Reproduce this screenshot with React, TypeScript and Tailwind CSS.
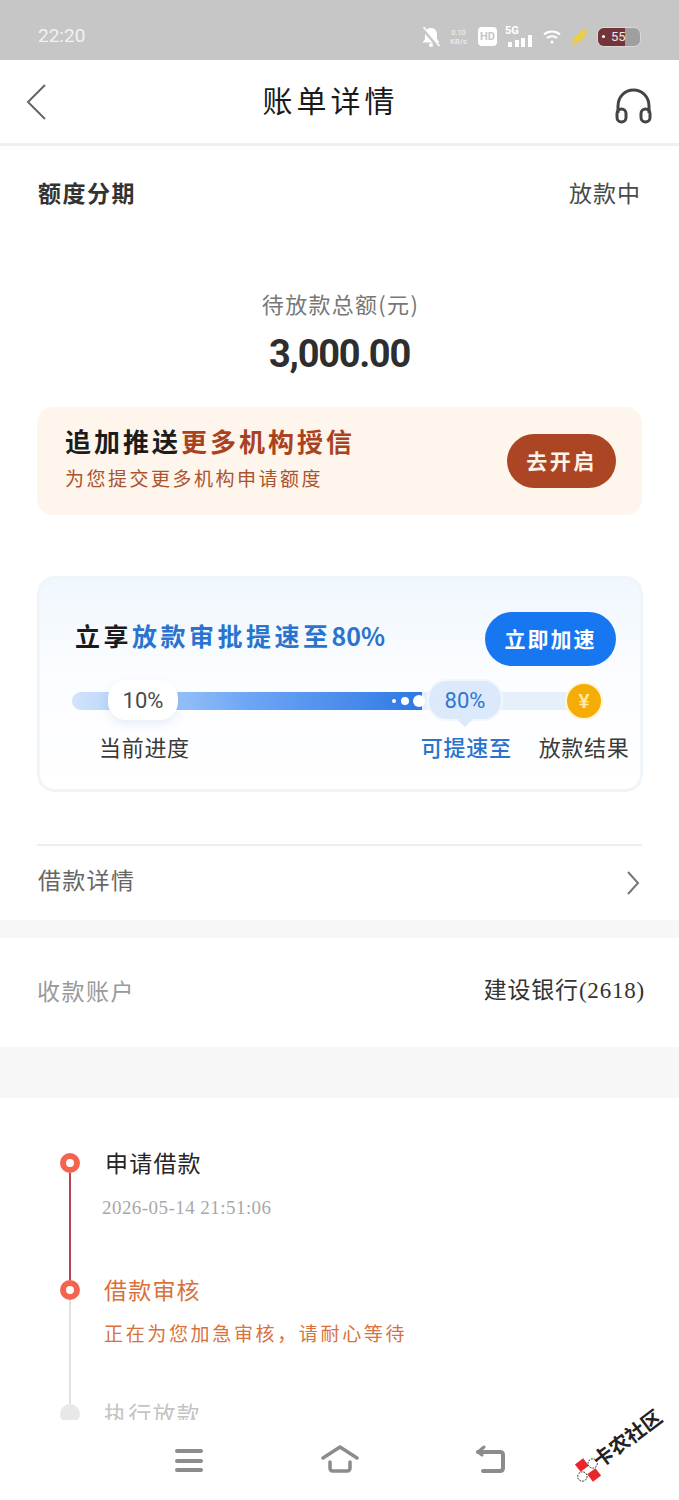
const cjk = "font-['Noto_Sans_CJK_SC','Liberation_Sans',sans-serif]";

function StatusBar() {
  return (
    <div className="flex h-[60px] items-center justify-between bg-[#c6c6c6] pl-[38px] pr-[38px] pt-[13px] text-white">
      <span className="font-['Roboto',sans-serif] text-[19px] text-[#f2f2f2]">22:20</span>
      <div className="flex items-center">
        <svg width="20" height="22" viewBox="0 0 20 22" className="mr-[8px]">
          <path d="M10 2c-3.500 0-6 2.500-6 6.500v4.500l-2.500 3.500h17L16 13V8.500C16 4.500 13.500 2 10 2z" fill="#fff" />
          <circle cx="10" cy="19" r="2" fill="#fff" />
          <path d="M1 2l17 19" stroke="#c6c6c6" strokeWidth="3.500" />
          <path d="M2.500 1l16 19" stroke="#fff" strokeWidth="1.500" />
        </svg>
        <div className="mr-[10px] flex w-[19px] flex-col items-center font-['Roboto',sans-serif] text-[7.500px] leading-[9px] text-[#f4f4f4]">
          <span>0.10</span>
          <span>KB/s</span>
        </div>
        <div className="mr-[8px] flex h-[19px] w-[19px] items-center justify-center rounded-[4px] bg-white font-['Roboto',sans-serif] text-[11px] font-bold leading-none text-[#c6c6c6]">
          HD
        </div>
        <div className="relative mr-[10px] h-[22px] w-[28px]">
          <span className="absolute left-0 top-[-3px] font-['Roboto',sans-serif] text-[11px] font-bold text-white">5G</span>
          <svg width="28" height="22" viewBox="0 0 28 22" className="absolute left-0 top-0">
            <rect x="3" y="16" width="4" height="5" fill="#fff" />
            <rect x="10" y="14" width="4" height="7" fill="#fff" />
            <rect x="16" y="12" width="4" height="9" fill="#fff" />
            <rect x="23" y="9" width="4" height="12" fill="#fff" />
          </svg>
        </div>
        <svg width="18" height="16" viewBox="0 0 18 16" className="mr-[9px]" fill="none" stroke="#fff" strokeWidth="2">
          <path d="M1 5.500c4.500-4 11.500-4 16 0" />
          <path d="M4 9c2.800-2.500 7.200-2.500 10 0" />
          <circle cx="9" cy="13" r="1.500" fill="#fff" stroke="none" />
        </svg>
        <svg width="20" height="20" viewBox="0 0 20 20" className="mr-[7px]">
          <path d="M15 0L0 15l5-1-3 6 9-7-1 4 10-16-6 5z" fill="#e9cf4a" />
        </svg>
        <div className="flex h-[20px] w-[44px] overflow-hidden rounded-[7px] border border-[#d8d8d8] bg-[#9f9f9f]">
          <div className="flex w-[27px] shrink-0 items-center bg-[#74343a] pl-[4px]">
            <span className="h-[3px] w-[3px] rounded-full bg-white" />
          </div>
          <span className="ml-[-14px] font-['Roboto',sans-serif] text-[13px] leading-[18px] text-[#f0e4e4]">55</span>
        </div>
      </div>
    </div>
  );
}

function Header() {
  return (
    <div className="relative flex h-[86px] items-center justify-center border-b-[3px] border-[#efefef] pb-[3px]">
      <svg width="22" height="36" viewBox="0 0 22 36" fill="none" stroke="#666666" strokeWidth="2" className="absolute left-[25px] top-[24px]">
        <path d="M20 1L3 18l17 17" />
      </svg>
      <h1 className={`${cjk} ml-[-18px] mt-[-2px] text-[30px] leading-none tracking-[4px] text-[#1a1a1a]`}>账单详情</h1>
      <svg width="40" height="38" viewBox="0 0 40 38" fill="none" stroke="#444444" strokeWidth="3" className="absolute left-[614px] top-[27px]">
        <path d="M4 26V19C4 9.500 11 3 19.500 3S35 9.500 35 19v7" />
        <rect x="3" y="22" width="9" height="13" rx="4.500" />
        <rect x="27" y="22" width="9" height="13" rx="4.500" />
      </svg>
    </div>
  );
}

function OrangeCard() {
  return (
    <div className="flex h-[108px] items-center justify-between rounded-[16px] bg-[#fef5ed] pl-[28px] pr-[26px]">
      <div className={`${cjk} self-start pt-[16px]`}>
        <p className="text-[26px] font-bold leading-[36px] tracking-[3px] text-[#1c1c1c]">
          追加推送<span className="text-[#a9431f]">更多机构授信</span>
        </p>
        <p className="mt-[5px] text-[19px] leading-[28px] tracking-[2.500px] text-[#a9532f]">为您提交更多机构申请额度</p>
      </div>
      <button className={`${cjk} mt-[-1px] h-[54px] w-[109px] rounded-full bg-[#ab4524] text-[21px] font-bold tracking-[2.500px] text-[#fff3e6]`}>
        去开启
      </button>
    </div>
  );
}

function SpeedCard() {
  return (
    <div className="h-[216px] rounded-[18px] border-[3px] border-[#f0f5fa] bg-gradient-to-b from-[#f0f7fe] via-[#fcfdff] to-white pl-[33px] pr-[24px] pt-[33px]">
      <div className="flex items-center justify-between">
        <p className={`${cjk} ml-[2px] pb-[8px] text-[25px] font-bold leading-[46px] tracking-[3.500px] text-[#1b1b1b]`}>
          立享<span className="text-[#2a74cf]">放款审批提速至<span className="tracking-[0px]">80%</span></span>
        </p>
        <button className={`${cjk} h-[54px] w-[131px] rounded-full bg-[#1677f0] text-[21px] font-bold tracking-[2px] text-white`}>
          立即加速
        </button>
      </div>

      {/* progress track */}
      <div className="relative ml-[-1px] mt-[26px] h-[18px] w-[514px] rounded-full bg-[#e6f0fb]">
        <div className="h-full w-[350px] rounded-l-full bg-gradient-to-r from-[#d3e4fa] via-[#6da6f5] to-[#2d78e4]" />
        <div className="absolute left-[320px] top-[7px] h-[4px] w-[4px] rounded-full bg-white" />
        <div className="absolute left-[329px] top-[5px] h-[8px] w-[8px] rounded-full bg-white" />
        <div className="absolute left-[341px] top-[3px] h-[12px] w-[12px] rounded-full bg-white" />
        <div className="absolute left-[36px] top-[-12px] flex h-[40px] w-[70px] items-center justify-center rounded-[18px] bg-white font-['Roboto',sans-serif] text-[22px] text-[#4a4a4a] shadow-[0_4px_10px_rgba(60,120,200,0.12)]">
          10%
        </div>
        <div className="absolute left-[355px] top-[-13px] flex h-[42px] w-[76px] items-center justify-center rounded-[20px] border-2 border-[#f2f7fd] bg-[#dbe9fb] font-['Roboto',sans-serif] text-[22px] text-[#2d76d2]">
          <span className="absolute bottom-[-6px] left-1/2 h-[10px] w-[10px] -translate-x-1/2 rotate-45 bg-[#dbe9fb]" />
          <span className="relative">80%</span>
        </div>
        <div className="absolute left-[493px] top-[-10px] flex h-[38px] w-[38px] items-center justify-center rounded-full border-[2px] border-[#fff6d8] bg-[#f5ad05] font-['Liberation_Sans',sans-serif] text-[20px] font-bold text-[#ffe9a8]">
          ¥
        </div>
      </div>

      <div className={`${cjk} ml-[26px] mt-[19px] flex text-[22px] leading-[34px] tracking-[0.700px] whitespace-nowrap`}>
        <span className="text-[#3a3a3a]">当前进度</span>
        <span className="ml-[231px] font-medium text-[#2a74cf]">可提速至</span>
        <span className="ml-[27px] text-[#3a3a3a]">放款结果</span>
      </div>
    </div>
  );
}

function TimelineStep({ title, sub, state }: { title: string; sub?: string; state: "done" | "active" | "todo" }) {
  const titleColor = state === "done" ? "text-[#262626]" : state === "active" ? "text-[#d9713c]" : "text-[#c4c4c4]";
  const subColor = state === "active" ? "text-[#d9713c]" : "text-[#a8a8a8]";
  const line = state === "done" ? "bg-[#b8434f]" : "bg-[#e2e2e2]";
  return (
    <div className={`flex items-start ${state === "done" ? "h-[127px]" : "h-[124px]"}`}>
      <div className="flex h-full w-[20px] flex-col items-center pt-[6px]">
        {state === "todo" ? (
          <div className="h-[20px] w-[20px] shrink-0 rounded-full bg-[#e8e8e8]" />
        ) : (
          <div className="h-[20px] w-[20px] shrink-0 rounded-full border-[6px] border-[#f46350] bg-white" />
        )}
        <div className={`mb-[-6px] w-[2px] flex-1 ${line}`} />
      </div>
      <div className={state === "done" ? "ml-[25px] mt-[-1px]" : "ml-[24px] mt-[-1px]"}>
        <p className={`${cjk} text-[23px] leading-[32px] tracking-[1.200px] ${titleColor}`}>{title}</p>
        {sub && (
          <p
            className={
              state === "done"
                ? `ml-[-3px] mt-[17px] font-['Liberation_Serif',serif] text-[19px] leading-[26px] tracking-[0.450px] ${subColor}`
                : `${cjk} mt-[15px] text-[19px] leading-[26px] tracking-[2.650px] ${subColor}`
            }
          >
            {sub}
          </p>
        )}
      </div>
    </div>
  );
}

function NavBar() {
  return (
    <div className="relative flex h-[80px] items-start bg-white pt-[29px]">
      <div className="ml-[175px] flex w-[28px] flex-col gap-[5.500px]">
        <span className="h-[4px] rounded-full bg-[#8c8c8c]" />
        <span className="h-[4px] rounded-full bg-[#8c8c8c]" />
        <span className="h-[4px] rounded-full bg-[#8c8c8c]" />
      </div>
      <svg width="38" height="30" viewBox="0 0 38 30" fill="none" stroke="#8c8c8c" strokeWidth="3.500" strokeLinecap="round" strokeLinejoin="round" className="ml-[118px] mt-[-5px]">
        <path d="M2 14L19 3l17 11" />
        <path d="M9 18v6c0 2 1 3 3 3h14c2 0 3-1 3-3v-6" />
      </svg>
      <svg width="32" height="28" viewBox="0 0 32 28" fill="none" stroke="#8c8c8c" strokeWidth="4" strokeLinecap="round" strokeLinejoin="round" className="ml-[115px] mt-[-4px]">
        <path d="M4 7h22c2 0 3 1 3 3v13c0 2-1 3-3 3H9" />
        <path d="M10 2L4 7l4 3" strokeWidth="3" />
      </svg>

      {/* watermark */}
      <svg width="28" height="28" viewBox="0 0 30 30" className="absolute left-[574px] top-[36px]">
        <rect x="3" y="5" width="11" height="10" fill="#e8262c" transform="rotate(-37 8 10)" />
        <rect x="16" y="15" width="11" height="10" fill="#e8262c" transform="rotate(-37 22 20)" />
        <circle cx="20" cy="8" r="5" fill="#fff" stroke="#222" strokeWidth="1" strokeDasharray="2 1" />
        <circle cx="9" cy="22" r="5" fill="#fff" stroke="#222" strokeWidth="1" strokeDasharray="2 1" />
      </svg>
      <span className={`${cjk} absolute left-[595px] top-[31px] origin-left -rotate-[37deg] whitespace-nowrap text-[20px] font-bold leading-[22px] text-[#222222]`}>
        卡农社区
      </span>
    </div>
  );
}

export default function App() {
  return (
    <div className={`${cjk} h-[1500px] w-[679px] overflow-hidden bg-white`}>
      <StatusBar />
      <Header />

      <div className="h-[774px] px-[37px]">
        <div className="flex h-[96px] items-center justify-between pb-[3px] pl-[1px] pr-[1px]">
          <span className="text-[23px] font-bold tracking-[1.500px] text-[#333333]">额度分期</span>
          <span className="text-[23px] tracking-[1px] text-[#4a4a4a]">放款中</span>
        </div>
        <div className="mt-[42px] flex flex-col items-center">
          <span className="ml-[2px] text-[22px] leading-[38px] tracking-[1.300px] text-[#777777]">待放款总额(元)</span>
          <span className="mt-[5px] font-['Roboto',sans-serif] text-[38px] font-bold leading-[54px] tracking-[-1.300px] text-[#2e2e2e]">3,000.00</span>
        </div>
        <div className="mt-[26px]">
          <OrangeCard />
        </div>
        <div className="mt-[61px] w-[606px]">
          <SpeedCard />
        </div>
        <div className="mt-[52px] flex h-[75px] items-center justify-between border-t-2 border-[#eeeeee] pb-[6px] pl-[1px] pr-[2px]">
          <span className="text-[23px] tracking-[1.300px] text-[#666666]">借款详情</span>
          <svg width="14" height="24" viewBox="0 0 14 24" fill="none" stroke="#777777" strokeWidth="2" className="mt-[6px]">
            <path d="M2 1l10 11L2 23" />
          </svg>
        </div>
      </div>

      <div className="h-[18px] bg-[#f7f7f7]" />

      <div className="flex h-[109px] items-center justify-between pb-[5px] pl-[37px] pr-[34px]">
        <span className="text-[23px] tracking-[1.500px] text-[#9a9a9a]">收款账户</span>
        <span className="text-[23px] tracking-[0.800px] text-[#333333]">
          建设银行<span className="font-['Liberation_Serif',serif]">(2618)</span>
        </span>
      </div>

      <div className="h-[51px] bg-[#f7f7f7]" />

      <div className="h-[322px] overflow-hidden pl-[60px] pt-[49px]">
        <TimelineStep title="申请借款" sub="2026-05-14 21:51:06" state="done" />
        <TimelineStep title="借款审核" sub="正在为您加急审核，请耐心等待" state="active" />
        <TimelineStep title="执行放款" state="todo" />
      </div>

      <NavBar />
    </div>
  );
}
